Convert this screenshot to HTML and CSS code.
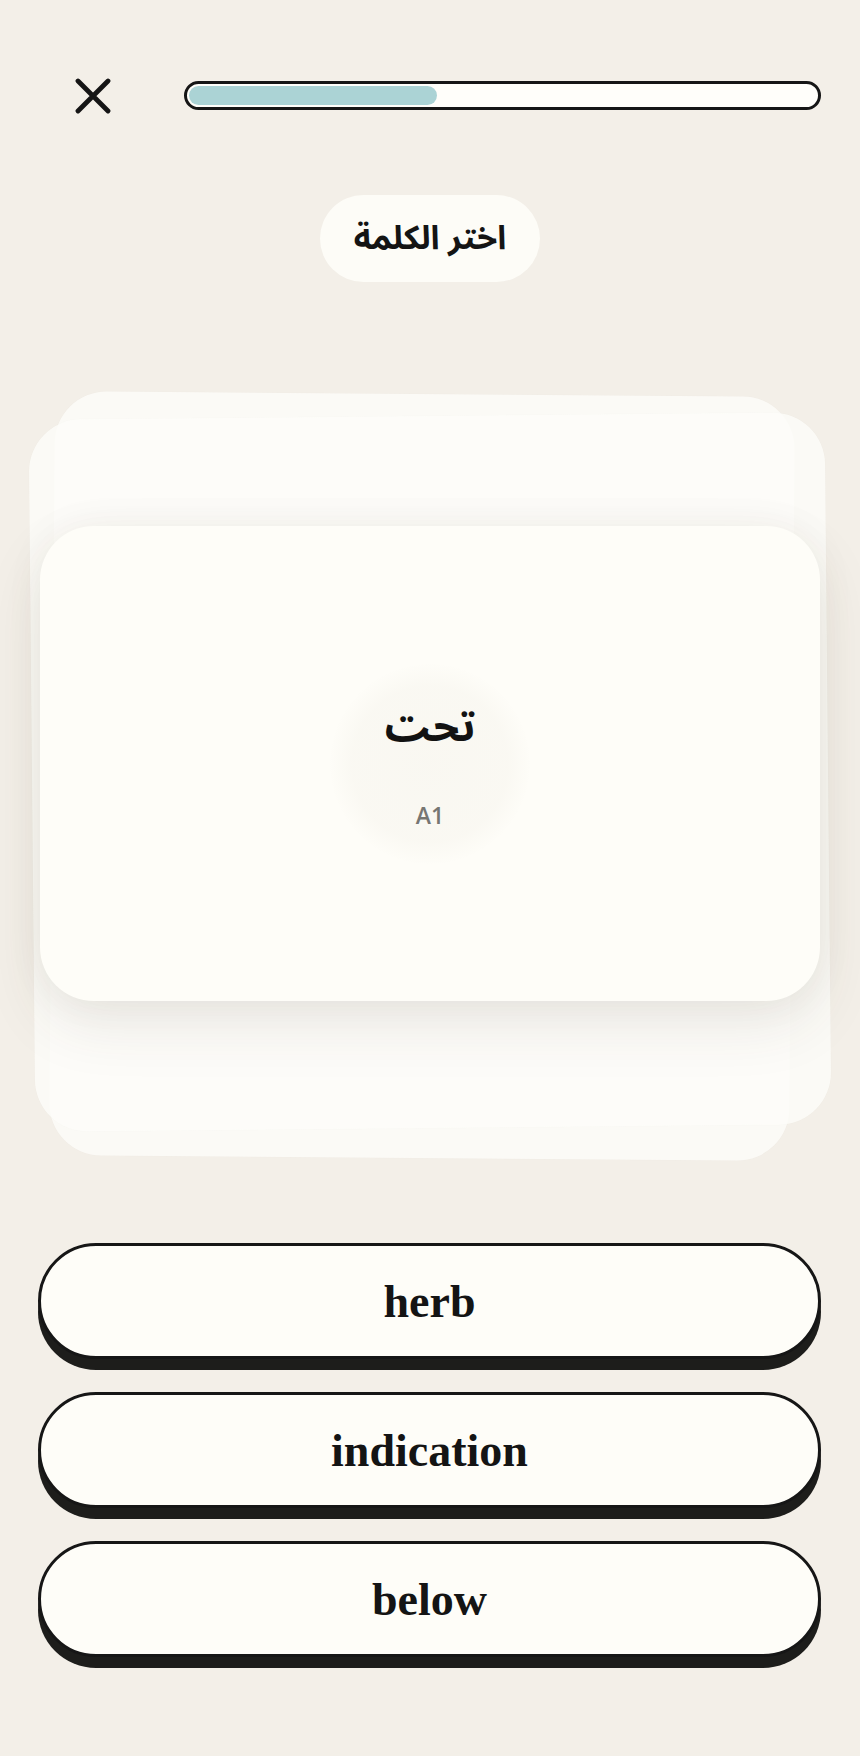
FILE: index.html
```html
<!DOCTYPE html>
<html lang="ar">
<head>
<meta charset="utf-8">
<title>اختر الكلمة</title>
<link rel="stylesheet" href="styles.css">
</head>
<body>
<main class="app" dir="ltr">
  <header class="topbar">
    <button class="close" aria-label="إغلاق">
      <svg viewBox="0 0 36 36" width="36" height="36" aria-hidden="true">
        <path d="M3 3 L33 33 M33 3 L3 33" fill="none" stroke="#151515" stroke-width="4.8" stroke-linecap="round"/>
      </svg>
    </button>
    <div class="progress">
      <div class="progress-fill" style="width: 39.5%"></div>
    </div>
  </header>

  <div class="prompt-row">
    <div class="prompt" dir="rtl">اختر الكلمة</div>
  </div>

  <section class="stage">
    <div class="ghost ghost-back"></div>
    <div class="ghost ghost-mid"></div>
    <div class="card">
      <div class="card-glow"></div>
      <div class="word" dir="rtl">تحت</div>
      <div class="level">A1</div>
    </div>
  </section>

  <section class="options">
    <button class="option">herb</button>
    <button class="option">indication</button>
    <button class="option">below</button>
  </section>
</main>
</body>
</html>
```

FILE: styles.css
```css
html, body {
  margin: 0;
  padding: 0;
}

body {
  background: #f3efe8;
  width: 860px;
  height: 1756px;
  overflow: hidden;
  font-family: "Noto Sans", "DejaVu Sans", sans-serif;
  color: #161616;
}

.app {
  display: flex;
  flex-direction: column;
}

/* top bar: close button + progress */
.topbar {
  display: flex;
  align-items: center;
  margin-top: 81px;
  padding: 0 39px 0 75px;
  height: 29px;
  gap: 73px;
}

.close {
  width: 36px;
  height: 36px;
  padding: 0;
  border: 0;
  background: none;
  display: flex;
  flex: none;
}

.progress {
  flex: 1;
  height: 29px;
  box-sizing: border-box;
  border: 3px solid #161616;
  border-radius: 15px;
  background: #fffefa;
  padding: 2px;
}

.progress-fill {
  height: 100%;
  border-radius: 12px;
  background: #abd3d5;
}

/* instruction pill */
.prompt-row {
  display: flex;
  justify-content: center;
  margin-top: 85px;
}

.prompt {
  height: 87px;
  width: 220px;
  border-radius: 44px;
  background: #fdfcf7;
  display: flex;
  align-items: center;
  justify-content: center;
  font-family: "Noto Sans Arabic", "DejaVu Sans", sans-serif;
  font-weight: 700;
  font-size: 33px;
  color: #141414;
}

/* card stack */
.stage {
  position: relative;
  margin-top: 112px;
  height: 766px;
}

.ghost {
  position: absolute;
  border-radius: 52px;
  box-shadow: 0 0 2px rgba(0,0,0,0.02);
}

.ghost-back {
  left: 52px;
  top: 0;
  width: 740px;
  height: 764px;
  transform: rotate(0.45deg);
  background: rgba(252,251,247,0.9);
}

.ghost-mid {
  left: 32px;
  top: 22px;
  width: 796px;
  height: 712px;
  transform: rotate(-0.55deg);
  background: rgba(253,252,249,0.82);
}

.card {
  position: relative;
  margin: 132px 40px 0;
  height: 475px;
  border-radius: 54px;
  background: #fefdf8;
  box-shadow: 0 24px 60px rgba(70, 60, 40, 0.10), 0 0 40px rgba(70, 60, 40, 0.05);
  display: flex;
  flex-direction: column;
  align-items: center;
  justify-content: center;
  gap: 43px;
}

.card-glow {
  position: absolute;
  left: 50%;
  top: 50%;
  width: 200px;
  height: 200px;
  margin: -100px 0 0 -100px;
  border-radius: 50%;
  background: radial-gradient(circle, rgba(246,244,237,0.6) 0%, rgba(246,244,237,0.5) 55%, rgba(246,244,237,0) 72%);
}

.word {
  position: relative;
  font-family: "Noto Sans Arabic", "DejaVu Sans", sans-serif;
  font-weight: 700;
  font-size: 42px;
  line-height: 60px;
  color: #121212;
}

.level {
  position: relative;
  font-family: "Open Sans", "Noto Sans", sans-serif;
  font-weight: 600;
  font-size: 23px;
  line-height: 28px;
  color: #777672;
}

/* answer options */
.options {
  display: flex;
  flex-direction: column;
  gap: 33px;
  margin: 83px 39px 0 38px;
}

.option {
  height: 116px;
  box-sizing: border-box;
  border: 3px solid #161616;
  border-radius: 60px;
  background: #fefdf8;
  box-shadow: 0 11px 0 #1d1d1b;
  font-family: "Liberation Serif", "DejaVu Serif", serif;
  font-weight: 700;
  font-size: 46px;
  color: #141414;
  padding: 0;
}
```
